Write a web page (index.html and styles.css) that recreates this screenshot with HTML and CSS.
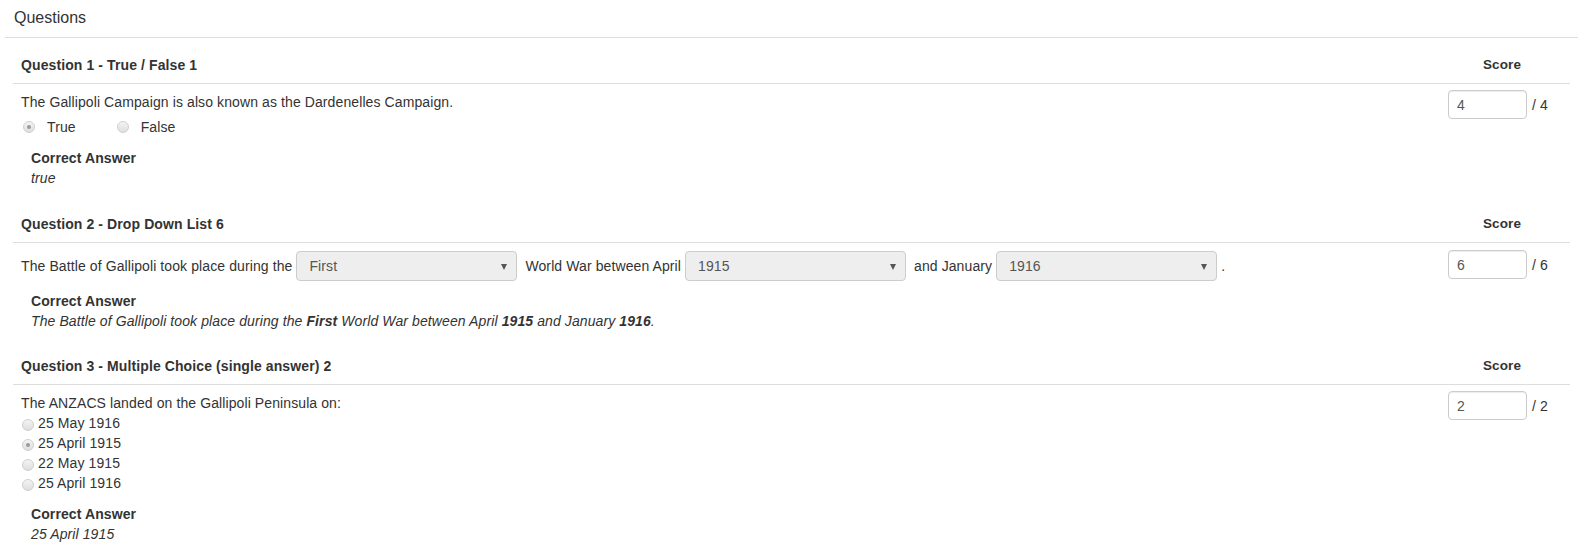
FILE: index.html
```html
<!DOCTYPE html>
<html>
<head>
<meta charset="utf-8">
<link rel="stylesheet" href="styles.css">
</head>
<body>
<div class="page">
  <div class="page-title">Questions</div>
  <div class="questions">

    <section class="question">
      <div class="q-head">
        <div class="q-title">Question 1 - True / False 1</div>
        <div class="q-score-head">Score</div>
      </div>
      <div class="q-body">
        <div class="q-main">
          <div class="q-text">The Gallipoli Campaign is also known as the Dardenelles Campaign.</div>
          <div class="tf-row">
            <label class="tf-opt"><span class="radio checked"></span>True</label>
            <label class="tf-opt"><span class="radio"></span>False</label>
          </div>
          <div class="answer">
            <div class="answer-label">Correct Answer</div>
            <div class="answer-text">true</div>
          </div>
        </div>
        <div class="q-score">
          <span class="score-input">4</span><span class="score-max">/ 4</span>
        </div>
      </div>
    </section>

    <section class="question">
      <div class="q-head q-head-2">
        <div class="q-title">Question 2 - Drop Down List 6</div>
        <div class="q-score-head">Score</div>
      </div>
      <div class="q-body">
        <div class="q-main">
          <div class="q-text dd-line">The Battle of Gallipoli took place during the <span class="select">First<span class="caret"></span></span> World War between April <span class="select">1915<span class="caret"></span></span> and January <span class="select">1916<span class="caret"></span></span>.</div>
          <div class="answer answer-dd">
            <div class="answer-label">Correct Answer</div>
            <div class="answer-text">The Battle of Gallipoli took place during the <b>First</b> World War between April <b>1915</b> and January <b>1916</b>.</div>
          </div>
        </div>
        <div class="q-score score-dd">
          <span class="score-input">6</span><span class="score-max">/ 6</span>
        </div>
      </div>
    </section>

    <section class="question">
      <div class="q-head">
        <div class="q-title">Question 3 - Multiple Choice (single answer) 2</div>
        <div class="q-score-head">Score</div>
      </div>
      <div class="q-body">
        <div class="q-main">
          <div class="q-text">The ANZACS landed on the Gallipoli Peninsula on:</div>
          <div class="mc-list">
            <label class="mc-opt"><span class="radio"></span>25 May 1916</label>
            <label class="mc-opt"><span class="radio checked"></span>25 April 1915</label>
            <label class="mc-opt"><span class="radio"></span>22 May 1915</label>
            <label class="mc-opt"><span class="radio"></span>25 April 1916</label>
          </div>
          <div class="answer">
            <div class="answer-label">Correct Answer</div>
            <div class="answer-text">25 April 1915</div>
          </div>
        </div>
        <div class="q-score">
          <span class="score-input">2</span><span class="score-max">/ 2</span>
        </div>
      </div>
    </section>

  </div>
</div>
</body>
</html>
```

FILE: styles.css
```css
* { box-sizing: border-box; }
html, body { margin: 0; padding: 0; background: #fff; }
body {
  font-family: "Liberation Sans", Arial, Helvetica, sans-serif;
  font-size: 14px;
  line-height: 20px;
  letter-spacing: 0.1px;
  color: #333;
}
.page { margin: 0 5px; }
.page-title {
  font-size: 16px;
  line-height: 20px;
  letter-spacing: 0;
  padding: 8px 9px 9px;
  border-bottom: 1px solid #ddd;
}
.questions { padding: 0 8px; }
.q-head {
  display: flex;
  border-bottom: 1px solid #ddd;
  padding-top: 17px;
}
.q-head-2 { padding-top: 18px; }
.q-title {
  flex: 1;
  font-weight: bold;
  font-size: 14px;
  padding: 0 8px 8px;
}
.q-score-head {
  width: 136px;
  text-align: center;
  font-weight: bold;
  font-size: 13.5px;
  padding: 0 8px 8px;
}
.q-body {
  display: flex;
  padding: 8px 0 8px;
}
.q-main { flex: 1; padding: 0 8px; }
.q-score {
  width: 136px;
  padding: 0 8px 0 14px;
  display: flex;
  align-items: center;
  align-self: flex-start;
  margin-top: -2px;
}
.score-dd { margin-top: -1px; }
.score-input {
  display: block;
  width: 79px;
  height: 29px;
  border: 1px solid #ccc;
  border-radius: 4px;
  padding: 4px 8px;
  color: #555;
  box-shadow: inset 0 1px 1px rgba(0,0,0,.075);
}
.score-max { margin-left: 5px; }
.tf-row { display: flex; margin: 5px 0 2px; }
.tf-opt { display: flex; align-items: center; margin-left: 2px; margin-right: 39px; }
.tf-opt .radio { margin-right: 12px; }
.radio {
  display: inline-block;
  width: 12px;
  height: 12px;
  border-radius: 50%;
  border: 1px solid #cfcfcf;
  background: linear-gradient(#f4f4f4, #dedede);
  position: relative;
  flex: none;
}
.radio.checked::after {
  content: "";
  position: absolute;
  left: 3px; top: 3px;
  width: 4px; height: 4px;
  border-radius: 50%;
  background: #9a9a9a;
}
.mc-opt { display: flex; align-items: center; }
.mc-opt .radio { margin: 4px 4px 0 1px; }
.answer { margin-top: 11px; padding-left: 10px; }
.answer-dd { margin-top: 10px; }
.answer-label { font-weight: bold; }
.answer-text { font-style: italic; }
.answer-text b { font-weight: bold; }
.dd-line { line-height: 30px; }
.select {
  display: inline-block;
  vertical-align: top;
  position: relative;
  width: 221px;
  height: 30px;
  line-height: 28px;
  background: #eee;
  border: 1px solid #ccc;
  border-radius: 4px;
  padding: 0 12px;
  color: #555;
  margin-right: 4px;
}
.caret {
  position: absolute;
  right: 9px;
  top: 12px;
  width: 0; height: 0;
  border-left: 3px solid transparent;
  border-right: 3px solid transparent;
  border-top: 6px solid #555;
}
```
